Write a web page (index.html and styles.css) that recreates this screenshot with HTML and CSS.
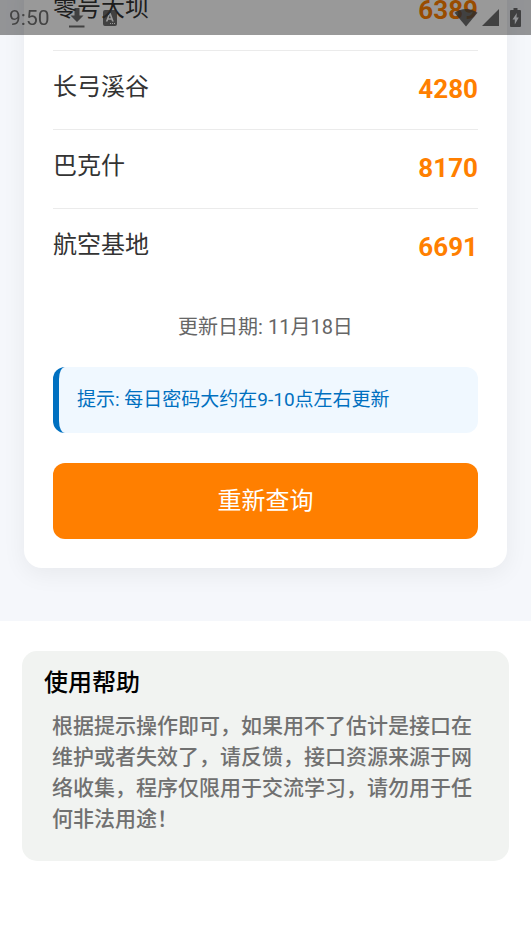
FILE: index.html
```html
<!DOCTYPE html>
<html lang="zh-CN">
<head>
<meta charset="utf-8">
<meta name="viewport" content="width=device-width, initial-scale=1">
<title>每日密码</title>
<link rel="stylesheet" href="styles.css">
</head>
<body>
<header class="status">
  <span class="time">9:50</span>
  <svg class="download" width="16" height="20" viewBox="0 0 16 20"><path d="M5.500 0h5v7.500h4L8 14 1.500 7.500h4zM0 17.500h15.500v2H0z"/></svg>
  <svg class="app" width="14" height="16" viewBox="0 0 14 16"><path fill-rule="evenodd" d="M2 0h10q2 0 2 2v12q0 2-2 2H2q-2 0-2-2V2q0-2 2-2zM6 3L2.800 11.500h1.800l.600-1.800h3.200l.600 1.800h1.800L7.700 3zM6.800 5l1.100 3.200H5.700zM7 13v1h1v-1zm2 0v1h1v-1zm2 0v1h1v-1z"/></svg>
  <span class="spacer"></span>
  <svg class="wifi" width="24" height="18" viewBox="0 0 24 18"><path d="M12 17.500L.500 3.800Q5.500 0 12 0t11.500 3.800z"/></svg>
  <svg class="signal" width="17" height="17" viewBox="0 0 17 17"><path d="M17 0v17H0z"/></svg>
  <svg class="battery" width="11" height="19" viewBox="0 0 11 19"><path fill-rule="evenodd" d="M3.500 0h4v2H10q1 0 1 1v15q0 1-1 1H1q-1 0-1-1V3q0-1 1-1h2.500zM6.800 5L2.500 11.500h2.300V16.500L8.800 9.500H6.500z"/></svg>
</header>
<main>
  <section class="result">
    <div class="card">
      <ul class="list">
        <li><span class="name">零号大坝</span><strong class="code">6389</strong></li>
        <li><span class="name">长弓溪谷</span><strong class="code">4280</strong></li>
        <li><span class="name">巴克什</span><strong class="code">8170</strong></li>
        <li><span class="name">航空基地</span><strong class="code">6691</strong></li>
      </ul>
      <p class="date">更新日期: 11月18日</p>
      <p class="tip">提示: 每日密码大约在9-10点左右更新</p>
      <button class="query" type="button">重新查询</button>
    </div>
  </section>
  <section class="help">
    <h2>使用帮助</h2>
    <p>根据提示操作即可，如果用不了估计是接口在维护或者失效了，请反馈，接口资源来源于网络收集，程序仅限用于交流学习，请勿用于任何非法用途！</p>
  </section>
</main>
</body>
</html>
```
FILE: styles.css
```css
* { box-sizing: border-box; }
body {
  margin: 0;
  background: #fff;
  color: #333;
  font-family: Roboto, "Noto Sans CJK SC", sans-serif;
}
h2, p, ul { margin: 0; padding: 0; }

/* Translucent system bar over the scrolled page */
.status {
  position: fixed;
  top: 0;
  left: 0;
  right: 0;
  z-index: 1;
  display: flex;
  align-items: center;
  height: 35px;
  padding: 0 10px 0 9px;
  background: rgba(0, 0, 0, .4);
  color: #444;
}
.status svg { fill: #2b2b2b; fill-opacity: .8; }
.time { font-size: 21px; line-height: 36px; }
.download { margin-left: 19px; }
.app { margin-left: 18px; }
.spacer { flex: 1; }
.signal { margin-left: 4px; }
.battery { margin-left: 11px; }

.result {
  display: flow-root;
  padding: 0 24px 53px;
  background: #f5f7fb;
}
/* The list is scrolled partly under the system bar */
.card {
  margin-top: -28px;
  padding: 0 29px 29px;
  border-radius: 18px;
  background: #fff;
  box-shadow: 0 6px 24px rgba(0, 0, 0, .06);
}
.list { list-style: none; }
.list li {
  display: flex;
  justify-content: space-between;
  align-items: flex-start;
  padding: 18px 0 20px;
  border-bottom: 1px solid #ebebeb;
}
.list li:last-child { border-bottom: 0; }
.name { font-size: 24px; line-height: 36px; }
.code { font-size: 26px; line-height: 40px; color: #ff7f00; }
.date {
  margin-top: 25px;
  font-size: 20px;
  line-height: 30px;
  text-align: center;
  color: #666;
}
.tip {
  margin-top: 25px;
  padding: 18px;
  border-left: 6px solid #0070c0;
  border-radius: 12px;
  background: #f0f8ff;
  font-size: 19px;
  line-height: 30px;
  color: #0070c0;
}
.query {
  display: block;
  width: 100%;
  margin-top: 30px;
  padding: 20px;
  border: 0;
  border-radius: 12px;
  background: #ff7f00;
  color: #fff;
  font: inherit;
  font-size: 24px;
  line-height: 36px;
}

.help {
  margin: 30px 22px;
  padding: 14px 22px 26px;
  border-radius: 15px;
  background: #f1f3f1;
}
.help h2 {
  font-size: 24px;
  font-weight: 500;
  line-height: 36px;
  color: #000;
}
.help p {
  padding: 10px 8px 0;
  font-size: 21px;
  font-weight: 500;
  line-height: 31px;
  color: #707070;
}
```
